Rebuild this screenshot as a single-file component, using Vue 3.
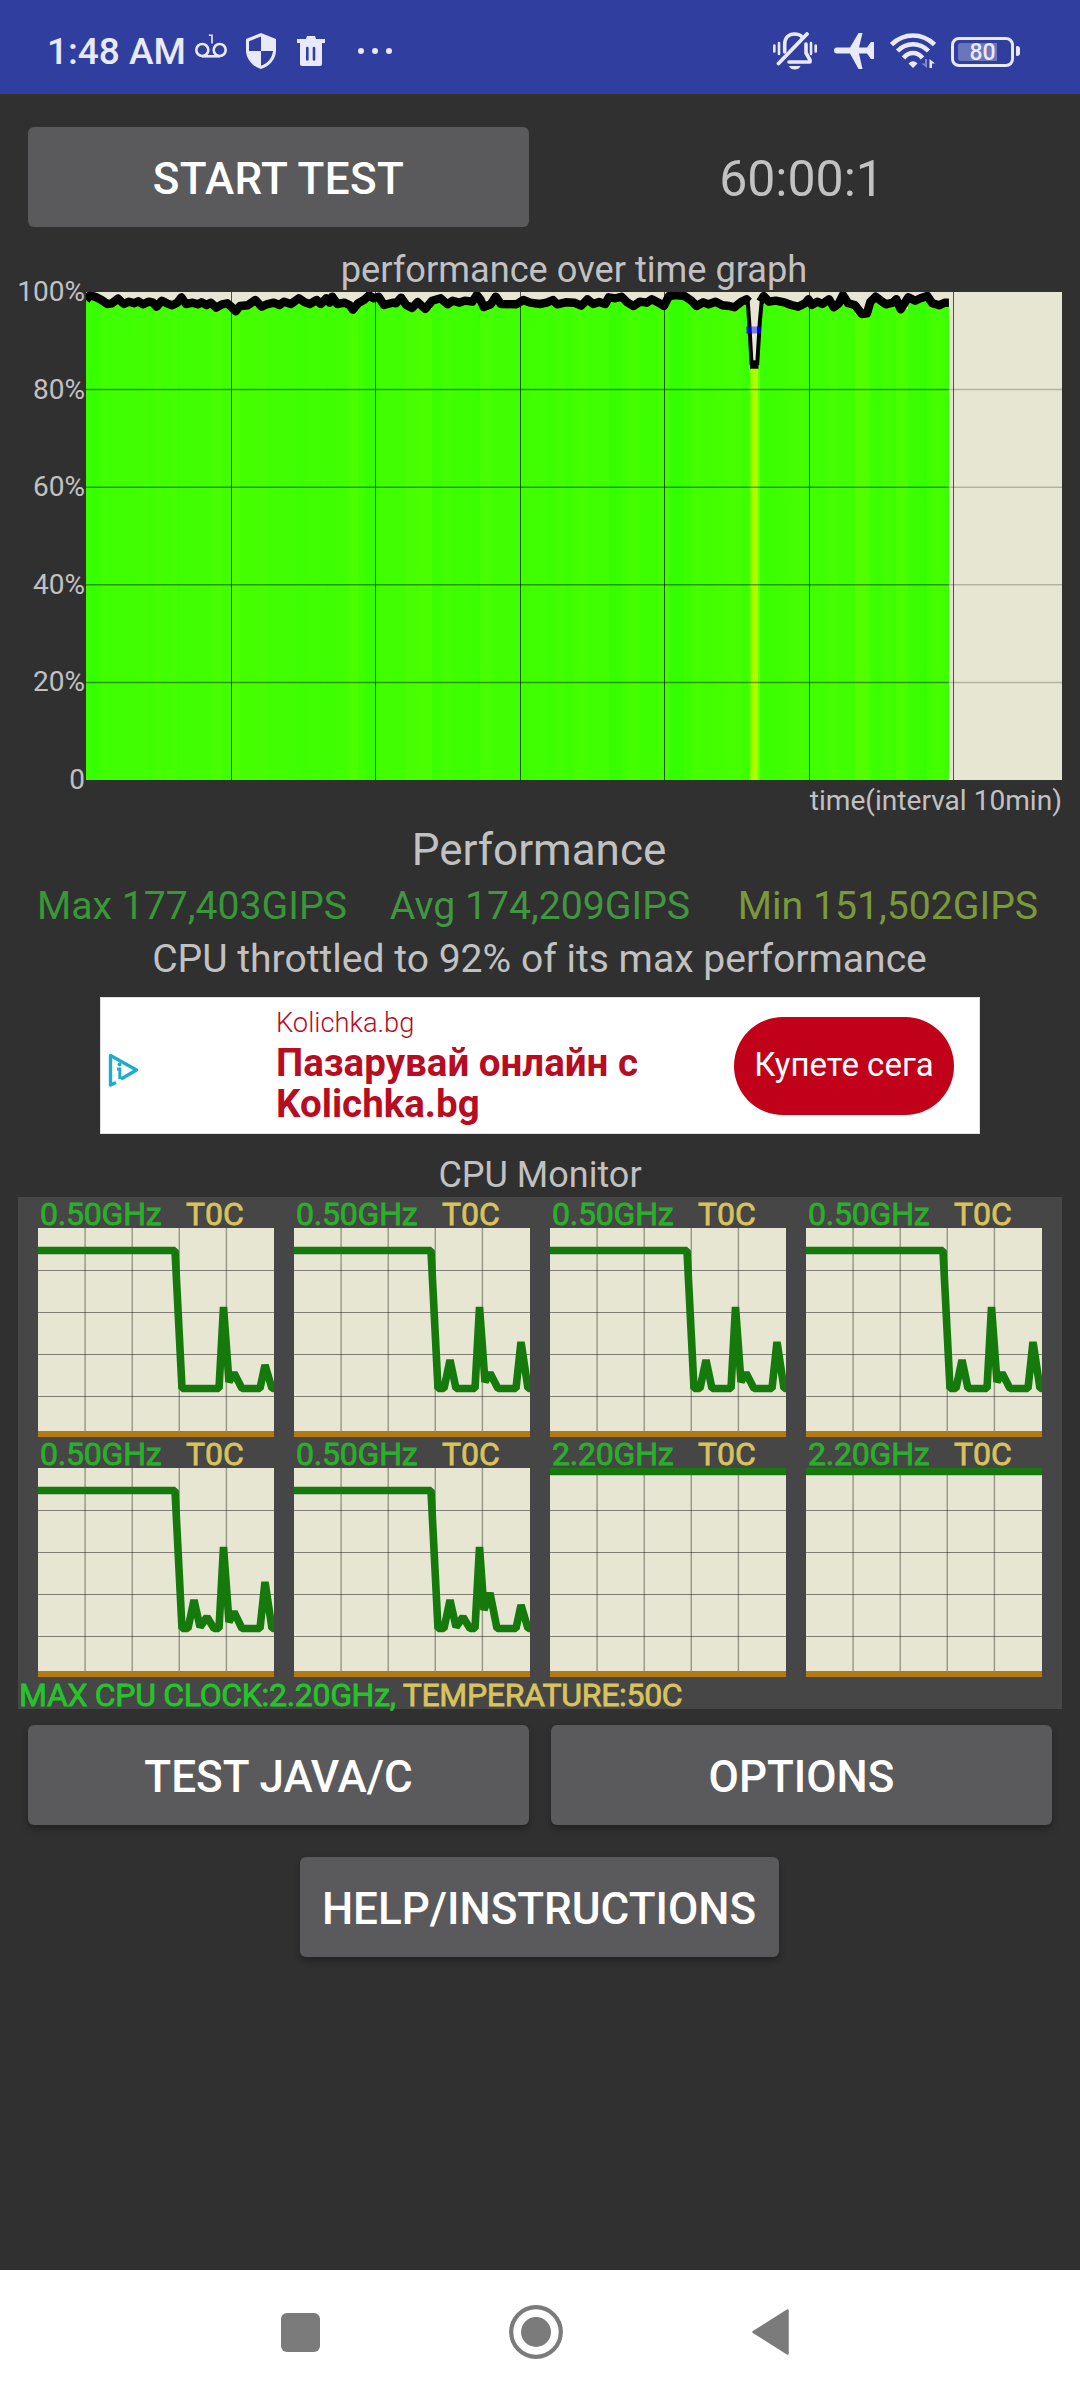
<template>
  <div class="screen">
    <header class="status">
      <span class="clock">1:48 AM</span>
      <svg class="voicemail" viewBox="0 0 32 24" width="32" height="24">
        <g fill="none" stroke="#e8eafb" stroke-width="2.6">
          <circle cx="7.3" cy="16" r="6" />
          <circle cx="24.7" cy="16" r="6" />
          <path d="M7 22.3H25" />
        </g>
        <path d="M13.8 1.3H17V9.5" fill="none" stroke="#e8eafb" stroke-width="1.6" />
      </svg>
      <svg class="shield" viewBox="0 0 30 36" width="30" height="36">
        <path d="M15 0L30 6V17C30 26 23.500 33.500 15 36C6.500 33.500 0 26 0 17V6Z" fill="#e8eafb" />
        <path d="M15 3.500V18H3V8.200ZM15 18H27C26.200 25.200 21.500 30.500 15 32.800Z" fill="#303f9f" />
      </svg>
      <svg class="trash" viewBox="0 0 28 30" width="28" height="30">
        <path d="M0 3H9L10 0H18L19 3H28V7H0Z" fill="#e8eafb" />
        <path d="M3 7H25V28Q25 30 23 30H5Q3 30 3 28Z" fill="#e8eafb" />
        <path d="M10.300 12V23.500M17 12V23.500" stroke="#303f9f" stroke-width="2.600" stroke-linecap="round" />
      </svg>
      <svg class="dots" viewBox="0 0 34 6" width="34" height="6">
        <circle v-for="cx in [3, 17, 31]" :key="cx" :cx="cx" cy="3" r="3" fill="#e8eafb" />
      </svg>
      <span class="spacer"></span>
      <svg class="bell" viewBox="0 0 44 38" width="44" height="38">
        <g fill="none" stroke="#e8eafb" stroke-linecap="round">
          <path d="M1.300 13.500V19.500M6 11V22M38 11V22M42.700 13.500V19.500" stroke-width="2.600" />
          <path d="M11.700 20V12.500C11.700 6 15.500 2 21.500 2C25 2 27.500 3 29 5" stroke-width="3.600" />
          <path d="M33 12V21L37 28V30H16" stroke-width="3.600" stroke-linejoin="round" />
          <path d="M5.500 31.500L34 2" stroke-width="3.800" />
        </g>
        <path d="M16 34H27.500Q26 37.600 21.700 37.600Q17.500 37.600 16 34Z" fill="#e8eafb" />
      </svg>
      <svg class="plane" viewBox="0 0 40 36" width="40" height="36">
        <path
          d="M3 14.500H16L24.500 0H28.500L25 14.500H33L37 9H40V26H37L33 20.500H25L28.500 36H24.500L16 20.500H3Q0 20.500 0 17.500Q0 14.500 3 14.500Z"
          fill="#e8eafb"
        />
      </svg>
      <svg class="wifi" viewBox="0 0 46 36" width="46" height="36">
        <g fill="none" stroke="#e8eafb" stroke-width="4.600">
          <path d="M1.500 11.500Q11 2.500 23 2.500T44.500 11.500" />
          <path d="M7.500 18Q14 11.200 23 11.200T38.500 18" />
          <path d="M13.500 25Q17.500 20 23 20T32.500 25" />
        </g>
        <path d="M18.500 30.500Q23 26 27.500 30.500L23 35Z" fill="#e8eafb" />
        <path d="M37 26V35L31.500 30.500H35V26Z" fill="#7f88cc" />
        <path d="M39.500 35V26L45 30.500H42V35Z" fill="#e8eafb" />
      </svg>
      <div class="battery"><span class="level"></span><span class="percent">80</span></div>
      <span class="nub"></span>
    </header>

    <main class="content">
      <div class="top-row">
        <button class="btn wide start">START TEST</button>
        <span class="timer">60:00:1</span>
      </div>

      <p class="graph-title">performance over time graph</p>
      <div class="graph">
        <div class="axis">
          <span v-for="label in axis" :key="label">{{ label }}</span>
        </div>
        <svg class="plot" viewBox="0 0 976 488" width="976" height="488">
          <rect width="976" height="488" fill="#e6e6d3" />
          <rect
            v-for="(bar, i) in bars"
            :key="i"
            :x="bar.x"
            :y="bar.y"
            :width="bar.width"
            :height="488 - bar.y"
            :fill="bar.color"
            shape-rendering="crispEdges"
          />
          <path v-for="n in 4" :key="'h' + n" :d="`M0 ${n * 97.6}H863`" stroke="#000" stroke-opacity="0.4" stroke-width="1.5" />
          <path v-for="n in 4" :key="'e' + n" :d="`M863 ${n * 97.6}H976`" stroke="#000" stroke-opacity="0.22" stroke-width="1.5" />
          <path v-for="n in 6" :key="'v' + n" :d="`M${Math.round(n * 144.5) + 0.5} 0V488`" stroke="#000" stroke-opacity="0.65" />
          <g fill="none" stroke="#000" stroke-width="8.400" stroke-linejoin="round">
            <polyline :points="traceBefore" />
            <polyline :points="traceAfter" />
            <path d="M664 72.500H672.500" />
          </g>
          <path
            d="M661.500 6L663.200 30L665.600 73M671.200 73L673.800 30L676 6"
            fill="none"
            stroke="#000"
            stroke-width="4"
          />
          <rect x="660" y="34.500" width="15" height="7" fill="#0000ff" fill-opacity="0.45" />
          <path d="M663 34.500V41.500M672.800 34.500V41.500" stroke="#0000d8" stroke-width="3.200" />
        </svg>
      </div>
      <p class="interval">time(interval 10min)</p>

      <h1 class="heading">Performance</h1>
      <div class="stats">
        <span class="max">Max 177,403GIPS</span>
        <span class="avg">Avg 174,209GIPS</span>
        <span class="min">Min 151,502GIPS</span>
      </div>
      <p class="throttled">CPU throttled to 92% of its max performance</p>

      <div class="banner">
        <svg class="adchoices" viewBox="0 0 31 34" width="31" height="34">
          <path d="M8 29.500L2.500 32V2.500L28.500 17L13 26" fill="none" stroke="#1badcb" stroke-width="3.400" stroke-linejoin="round" />
          <circle cx="11.500" cy="11.500" r="2" fill="#1badcb" />
          <path d="M9 16H11.800V26" fill="none" stroke="#1badcb" stroke-width="3" />
        </svg>
        <div class="ad-text">
          <span class="ad-site">Kolichka.bg</span>
          <strong>Пазарувай онлайн с<br />Kolichka.bg</strong>
        </div>
        <span class="ad-button">Купете сега</span>
      </div>

      <p class="monitor-title">CPU Monitor</p>
      <section class="monitor">
        <div class="cores">
          <div v-for="(core, i) in cores" :key="i" class="core">
            <div class="core-label"><span class="freq">{{ core.freq }}</span><span class="temp">T0C</span></div>
            <svg viewBox="0 0 236 209" width="236" height="209">
              <rect width="236" height="209" fill="#e6e6d3" />
              <path v-for="n in 4" :key="'v' + n" :d="`M${n * 47.1} 0V209`" stroke="#000" stroke-opacity="0.35" stroke-width="1.4" />
              <path v-for="n in 4" :key="'h' + n" :d="`M0 ${n * 42 + 0.5}H236`" stroke="#000" stroke-opacity="0.45" />
              <polyline :points="core.points" fill="none" stroke="#15790c" stroke-width="7.600" stroke-linejoin="bevel" />
              <rect y="203" width="236" height="6" fill="#b37a14" />
            </svg>
          </div>
        </div>
        <p class="summary"><span class="clock-max">MAX CPU CLOCK:2.20GHz, </span><span class="temp">TEMPERATURE:50C</span></p>
      </section>

      <div class="buttons">
        <button class="btn wide">TEST JAVA/C</button>
        <button class="btn wide">OPTIONS</button>
      </div>
      <div class="help-row">
        <button class="btn help">HELP/INSTRUCTIONS</button>
      </div>
    </main>

    <nav class="navbar">
      <svg class="recent" viewBox="0 0 39 39" width="39" height="39"><rect width="39" height="39" rx="6" fill="#7b7b7b" /></svg>
      <svg class="home" viewBox="0 0 54 54" width="54" height="54">
        <circle cx="27" cy="27" r="24.800" fill="none" stroke="#7b7b7b" stroke-width="4.200" />
        <circle cx="27" cy="27" r="15" fill="#7b7b7b" />
      </svg>
      <svg class="back" viewBox="0 0 37 46" width="37" height="46">
        <path d="M35.500 1.500V44.500L1.500 23Z" fill="#7b7b7b" stroke="#7b7b7b" stroke-width="2.500" stroke-linejoin="round" />
      </svg>
    </nav>
  </div>
</template>

<script setup>
import { computed } from 'vue';

const axis = ['100%', '80%', '60%', '40%', '20%', '0'];

// tick, drop from 100% (both in third-of-a-pixel steps)
const samples = [
  [0, 24], [12, 9], [30, 16], [45, 24], [62, 36], [75, 34], [93, 20], [110, 36], [125, 29], [140, 34],
  [152, 28], [165, 37], [182, 29], [195, 32], [205, 44], [220, 26], [235, 34], [250, 40], [265, 32], [277, 16],
  [290, 36], [310, 32], [325, 37], [335, 31], [350, 39], [362, 32], [378, 47], [395, 37], [410, 34], [422, 44],
  [435, 58], [447, 42], [470, 40], [492, 24], [510, 44], [525, 37], [545, 32], [562, 39], [575, 29], [595, 36],
  [618, 19], [635, 31], [650, 36], [670, 24], [682, 36], [698, 19], [707, 32], [715, 14], [730, 36], [750, 32],
  [765, 39], [775, 53], [790, 34], [810, 22], [822, 10], [835, 19], [850, 14], [865, 39], [890, 32], [900, 34],
  [915, 17], [930, 39], [947, 48], [963, 30], [985, 51], [1005, 26], [1030, 19], [1050, 37], [1065, 26], [1085, 32],
  [1100, 26], [1122, 29], [1135, 9], [1145, 22], [1155, 45], [1175, 37], [1190, 14], [1205, 36], [1250, 37], [1270, 24],
  [1290, 32], [1318, 36], [1338, 32], [1356, 24], [1368, 37], [1393, 31], [1418, 32], [1438, 41], [1456, 22], [1473, 36],
  [1490, 30], [1508, 36], [1518, 16], [1538, 19], [1555, 14], [1573, 32], [1590, 42], [1608, 29], [1628, 32], [1643, 22],
  [1663, 32], [1678, 42], [1693, 12], [1713, 9], [1738, 12], [1758, 26], [1773, 42], [1793, 31], [1808, 37], [1828, 29],
  [1848, 40], [1868, 42], [1883, 46], [1903, 29], [1918, 22], [1925, 29], [1930, 114], [1937, 218], [1946, 218], [1952, 114],
  [1958, 29], [1968, 12], [1983, 29], [2003, 26], [2028, 31], [2048, 39], [2068, 44], [2088, 34], [2098, 22], [2108, 39],
  [2123, 29], [2138, 36], [2158, 22], [2171, 46], [2186, 34], [2198, 9], [2213, 34], [2233, 39], [2253, 66], [2268, 64],
  [2278, 29], [2293, 14], [2308, 26], [2323, 37], [2343, 32], [2353, 22], [2366, 52], [2388, 16], [2408, 26], [2423, 19],
  [2443, 12], [2458, 34], [2478, 40], [2493, 32], [2506, 32],
];

const points = samples.map(([t, drop]) => ({ x: t / 2.904, y: drop / 3 }));

const toPath = list => list.map(p => `${p.x.toFixed(1)},${p.y.toFixed(1)}`).join(' ');

// the throttling dip is drawn on its own, with thin walls
const traceBefore = computed(() => toPath(points.filter(p => p.x < 664)));
const traceAfter = computed(() => toPath(points.filter(p => p.x > 674)));

// greener at full speed, yellow when throttled
const bars = computed(() =>
  points.slice(0, -1).map((p, i) => {
    const x = Math.round(p.x);
    const y = Math.max(p.y, points[i + 1].y);
    const red = Math.round(44 + y * 1.7);
    return { x, y, width: Math.round(points[i + 1].x) - x, color: `rgb(${red}, 255, 0)` };
  })
);

const drop = '0,22.5 137,22.5 144,160.5';
const spike = '181,160.5 185.500,79 191,154';
const cores = [
  { freq: '0.50GHz', points: `${drop} ${spike} 196,145 204,160.5 222,160.5 227,137 234,160.5 236,160.5` },
  { freq: '0.50GHz', points: `${drop} 150,160.5 156,132 162,160.5 ${spike} 196,145 204,160.5 222,160.5 227,114 234,160.5 236,160.5` },
  { freq: '0.50GHz', points: `${drop} 150,160.5 156,132 162,160.5 ${spike} 196,145 204,160.5 222,160.5 227,114 234,160.5 236,160.5` },
  { freq: '0.50GHz', points: `${drop} 150,160.5 156,132 162,160.5 ${spike} 196,145 204,160.5 222,160.5 227,114 234,160.5 236,160.5` },
  { freq: '0.50GHz', points: `${drop} 150,160.5 156,132 162,159 169,149 176,160.5 ${spike} 196,144 204,160.5 222,160.5 227,114 234,160.5 236,160.5` },
  { freq: '0.50GHz', points: `${drop} 150,160.5 156,132 162,159 169,149 176,160.5 181,160.5 185.500,79 190,142 196,125 203,160.5 222,160.5 227,137 234,160.5 236,160.5` },
  { freq: '2.20GHz', points: '0,3.5 236,3.5' },
  { freq: '2.20GHz', points: '0,3.5 236,3.5' },
];
</script>

<style>
body {
  margin: 0;
  background: #303030;
}
</style>

<style scoped>
.screen {
  width: 1080px;
  height: 2400px;
  display: flex;
  flex-direction: column;
  font-family: Roboto, "Liberation Sans", sans-serif;
  color: #c1c1c1;
  background: #303030;
  overflow: hidden;
}

p, h1 {
  margin: 0;
  font-weight: 400;
  text-align: center;
  white-space: nowrap;
}

svg {
  display: block;
  flex: none;
}

.status {
  height: 94px;
  box-sizing: border-box;
  padding: 8px 60px 0 47px;
  display: flex;
  align-items: center;
  background: #303f9f;
  color: #e8eafb;
}

.clock {
  width: 148px;
  padding-top: 2px;
  font-size: 37px;
  font-weight: 500;
  line-height: 44px;
  white-space: nowrap;
}

.voicemail { margin-bottom: 10px; }
.shield { margin-left: 19px; }
.trash { margin-left: 21px; }
.dots { margin-left: 33px; }
.spacer { flex: 1; }
.plane { margin-left: 17px; }
.wifi { margin-left: 16px; }

.battery {
  width: 63px;
  height: 30px;
  margin: 1px 0 0 15px;
  box-sizing: border-box;
  border: 3px solid #e8eafb;
  border-radius: 8px;
  display: grid;
  align-items: center;
}

.level, .percent { grid-area: 1 / 1; }

.level {
  width: 39px;
  height: 18px;
  margin-left: 4px;
  border-radius: 3px 0 0 3px;
  background: #6a75bb;
}

.percent {
  padding-top: 1px;
  font-size: 23px;
  font-weight: 500;
  line-height: 24px;
  text-align: center;
}

.nub {
  width: 4px;
  height: 10px;
  margin-left: 2px;
  border-radius: 1px 3px 3px 1px;
  background: #e8eafb;
}

.content {
  flex: 1;
  padding: 33px 18px 0;
}

.top-row {
  height: 100px;
  padding-left: 10px;
  display: flex;
}

.btn {
  height: 100px;
  padding: 0;
  border: 0;
  border-radius: 6px;
  background: #5a5a5c;
  box-shadow: 0 4px 6px rgba(0, 0, 0, 0.3);
  color: #fff;
  font-family: inherit;
  font-size: 44px;
  font-weight: 500;
  line-height: 104px;
  white-space: nowrap;
}

.wide { width: 501px; }
.start {
  box-shadow: none;
  letter-spacing: 0.4px;
}
.help { width: 479px; }

.timer {
  flex: 1;
  padding-left: 12px;
  font-size: 50px;
  line-height: 105px;
  text-align: center;
}

.graph-title {
  padding: 20px 0 0 68px;
  font-size: 36.2px;
  line-height: 45px;
}

.graph {
  height: 488px;
  display: flex;
  justify-content: flex-end;
}

.axis {
  display: flex;
  flex-direction: column;
  justify-content: space-between;
  align-items: flex-end;
  padding-right: 1px;
  font-size: 28px;
  line-height: 0;
}

.interval {
  font-size: 28.1px;
  line-height: 41px;
  text-align: right;
}

.heading {
  padding-right: 2px;
  font-size: 44px;
  line-height: 59px;
}

.stats {
  display: grid;
  grid-template-columns: repeat(3, 1fr);
  font-size: 39.2px;
  line-height: 52px;
  text-align: center;
  white-space: nowrap;
}

.max { color: #389838; }
.avg { color: #419641; }
.min { color: #7b993b; }

.throttled {
  padding-right: 1px;
  font-size: 39.1px;
  line-height: 55px;
}

.banner {
  width: 880px;
  height: 137px;
  box-sizing: border-box;
  margin: 10px auto 0;
  padding: 0 25px 0 7px;
  border: 1px solid #e0e0e0;
  display: flex;
  align-items: center;
  background: #fff;
}

.adchoices { margin-top: 9px; }

.ad-text {
  flex: 1;
  margin: -2px 0 0 137px;
  display: flex;
  flex-direction: column;
  color: #b80c22;
}

.ad-site {
  font-size: 27.300px;
  font-weight: 300;
  line-height: 37px;
}

.ad-text strong {
  font-size: 38.500px;
  font-weight: 700;
  line-height: 41.500px;
  white-space: nowrap;
}

.ad-button {
  width: 220px;
  height: 98px;
  margin-top: 1px;
  border-radius: 50px;
  background: #c10019;
  color: #fff;
  font-size: 33px;
  line-height: 95px;
  text-align: center;
  white-space: nowrap;
}

.monitor-title {
  padding-top: 19px;
  font-size: 36px;
  line-height: 44px;
}

.monitor {
  height: 512px;
  background: #464646;
}

.cores {
  padding: 0 20px;
  display: grid;
  grid-template-columns: repeat(4, 236px);
  column-gap: 20px;
}

.core-label {
  height: 31px;
  display: flex;
  padding-left: 2px;
  font-size: 32px;
  line-height: 35px;
}

.freq {
  width: 146px;
  color: #2cae2c;
  letter-spacing: -0.2px;
}

.temp { color: #d8c35c; }
.clock-max { color: #26c32c; }

.freq, .core-label .temp, .summary { -webkit-text-stroke: 0.8px; }

.summary {
  padding-left: 1px;
  font-size: 32px;
  line-height: 36px;
  letter-spacing: -0.32px;
  text-align: left;
  white-space: pre;
}

.buttons {
  margin-top: 16px;
  display: flex;
  justify-content: center;
  gap: 22px;
}

.help-row {
  margin-top: 32px;
  padding-right: 2px;
  display: flex;
  justify-content: center;
}

.navbar {
  height: 130px;
  display: flex;
  align-items: center;
  padding: 0 0 6px 281px;
  box-sizing: border-box;
  background: #fff;
}

.home { margin-left: 189px; }
.back { margin-left: 189px; }
</style>
